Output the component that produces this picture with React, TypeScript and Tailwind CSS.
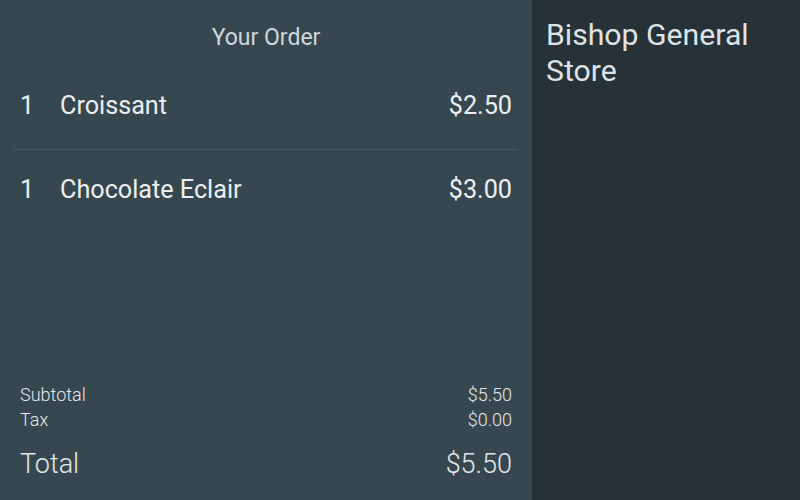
import React from "react";

const items = [
  { qty: 1, name: "Croissant", price: "$2.50" },
  { qty: 1, name: "Chocolate Eclair", price: "$3.00" },
];

export default function App() {
  return (
    <div className="flex h-[500px] w-[800px] font-['Roboto',sans-serif] overflow-hidden">
      <div className="flex w-[532px] flex-col bg-[#37474f]">
        <div className="h-[64px] pt-[24px] text-center text-[23px] leading-[27px] text-[#cfd8dc]">
          Your Order
        </div>

        <div className="flex flex-col">
          <div className="flex items-center pl-[20px] pr-[20px] pt-[27px] pb-[28px] text-[25.2px] leading-[30px] text-[#eceff1]">
            <span className="w-[40px]">{items[0].qty}</span>
            <span className="flex-1">{items[0].name}</span>
            <span>{items[0].price}</span>
          </div>
          <div className="mx-[14px] h-px bg-[#4d5c63]" />
          <div className="flex items-center pl-[20px] pr-[20px] pt-[25px] text-[25.2px] leading-[30px] text-[#eceff1]">
            <span className="w-[40px]">{items[1].qty}</span>
            <span className="flex-1">{items[1].name}</span>
            <span>{items[1].price}</span>
          </div>
        </div>

        <div className="mt-auto px-[20px] pb-[18px] font-light text-[#e3e8ea]">
          <div className="flex justify-between text-[18px] leading-[25px]">
            <span>Subtotal</span>
            <span>$5.50</span>
          </div>
          <div className="flex justify-between text-[18px] leading-[25px]">
            <span>Tax</span>
            <span>$0.00</span>
          </div>
          <div className="mt-[14px] flex justify-between text-[27px] leading-[36px]">
            <span>Total</span>
            <span>$5.50</span>
          </div>
        </div>
      </div>

      <div className="flex-1 bg-[#263238] pl-[14px] pr-[14px] pt-[17px]">
        <div className="text-[30.2px] leading-[36px] text-[#dfe3e5]">
          Bishop General Store
        </div>
      </div>
    </div>
  );
}
